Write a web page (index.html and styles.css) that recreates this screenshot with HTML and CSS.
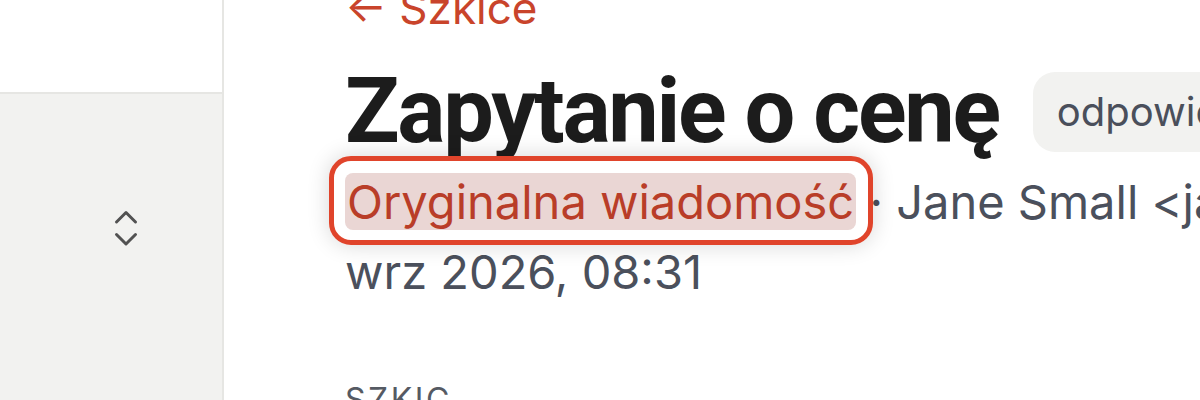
FILE: index.html
```html
<!DOCTYPE html>
<html lang="pl">
<head>
<meta charset="utf-8">
<title>Zapytanie o cenę</title>
<link rel="stylesheet" href="styles.css">
</head>
<body>
<div class="app">
  <aside class="sidebar">
    <div class="sidebar-top"></div>
    <div class="sidebar-body">
      <svg class="sort-icon" width="24" height="40" viewBox="0 0 24 40" aria-hidden="true">
        <path d="M2.5 13 L12 3.5 L21.5 13" />
        <path d="M2.5 25.5 L12 35 L21.5 25.5" />
      </svg>
    </div>
  </aside>
  <main class="main">
    <div class="content">
      <a class="back" href="#">← Szkice</a>
      <div class="title-row">
        <h1 class="title">Zapytanie o cenę</h1>
        <span class="badge">odpowiedziano</span>
      </div>
      <p class="meta"><span class="meta-line"><span class="origin">Oryginalna wiadomość</span> · Jane Small &lt;jane.small@example.com&gt; · 14</span><br>wrz 2026, 08:31</p>
      <div class="section-label">SZKIC</div>
    </div>
  </main>
</div>
</body>
</html>
```
FILE: styles.css
```css
html, body {
  margin: 0;
  padding: 0;
  background: #ffffff;
}
body {
  width: 1200px;
  height: 400px;
  overflow: hidden;
  font-family: "Inter", "Liberation Sans", sans-serif;
}
.app {
  display: flex;
  height: 400px;
}
.sidebar {
  width: 222px;
  flex: 0 0 222px;
  border-right: 2px solid #e6e6e3;
  display: flex;
  flex-direction: column;
}
.sidebar-top {
  height: 92px;
  background: #ffffff;
  border-bottom: 2px solid #e6e6e3;
}
.sidebar-body {
  flex: 1;
  background: #f2f2f0;
  padding: 115px 0 0 114px;
}
.sort-icon {
  display: block;
}
.sort-icon path {
  fill: none;
  stroke: #525252;
  stroke-width: 3;
  stroke-linecap: round;
  stroke-linejoin: round;
}
.main {
  flex: 1;
  min-width: 0;
  background: #ffffff;
  overflow: hidden;
}
.content {
  width: 1600px;
  padding-left: 121px;
  margin-top: -28px;
}
.back {
  display: block;
  color: #c9442b;
  text-decoration: none;
  font-size: 44px;
  line-height: 72px;
}
.title-row {
  display: flex;
  align-items: center;
  gap: 34px;
  margin-top: 18px;
}
.title {
  margin: 0;
  font-family: "Roboto", "Inter", sans-serif;
  font-size: 90px;
  font-weight: 700;
  letter-spacing: -0.025em;
  line-height: 1.1;
  color: #1c1c1c;
}
.badge {
  display: inline-flex;
  align-items: center;
  height: 80px;
  padding: 0 24px;
  border-radius: 22px;
  background: #f2f2f0;
  color: #4a4f5b;
  font-size: 40px;
}
.meta {
  margin: 6px 0 0;
  font-size: 47px;
  line-height: 70px;
  color: #4b505c;
}
.meta-line {
  white-space: nowrap;
}
.origin {
  position: relative;
  color: #b93d28;
  background: #ead6d4;
  border-radius: 8px;
  padding: 0 2px;
}
.origin::after {
  content: "";
  position: absolute;
  left: -16px;
  right: -17px;
  top: -17px;
  bottom: -15px;
  border: 5px solid #e0442b;
  border-radius: 22px;
  box-shadow: 0 0 22px rgba(0, 0, 0, 0.16);
}
.section-label {
  margin-top: 74px;
  font-size: 32px;
  letter-spacing: 0.08em;
  color: #555a63;
  line-height: 1.2;
}
```
